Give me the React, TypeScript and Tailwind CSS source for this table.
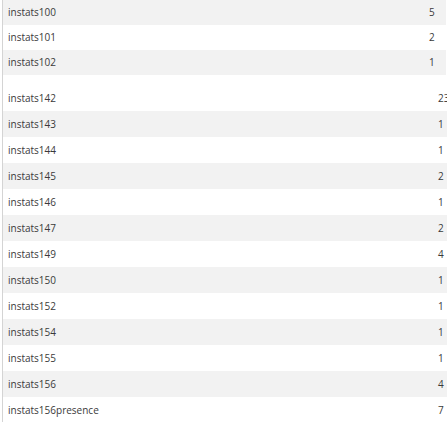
import React from 'react';

const top: [string, string][] = [
  ['instats100', '5'],
  ['instats101', '2'],
  ['instats102', '1'],
];

const rest: [string, string][] = [
  ['instats142', '23'],
  ['instats143', '1'],
  ['instats144', '1'],
  ['instats145', '2'],
  ['instats146', '1'],
  ['instats147', '2'],
  ['instats149', '4'],
  ['instats150', '1'],
  ['instats152', '1'],
  ['instats154', '1'],
  ['instats155', '1'],
  ['instats156', '4'],
  ['instats156presence', '7'],
];

export default function App() {
  return (
    <div
      className="w-[447px] h-[422px] overflow-hidden bg-white pl-[2px]"
      style={{ fontFamily: '"Open Sans", "Noto Sans", sans-serif' }}
    >
      <div className="h-full border-l border-[#d4d4d4] text-[10px] text-[#3a3a3a]">
        {/* first group */}
        <div className="w-[443px]">
          {top.map(([name, val], i) => (
            <div
              key={name}
              className={`flex items-center h-[25px] ${i % 2 === 0 ? 'bg-[#f2f2f2]' : 'bg-white'}`}
            >
              <span className="w-[426px] pl-[5px]">{name}</span>
              <span>{val}</span>
            </div>
          ))}
        </div>

        {/* second group */}
        <div className="mt-[10px] w-[470px]">
          {rest.map(([name, val], i) => (
            <div
              key={name}
              className={`flex items-center h-[26px] ${i % 2 === 1 ? 'bg-[#f2f2f2]' : 'bg-white'}`}
            >
              <span className="w-[435px] pl-[5px]">{name}</span>
              <span>{val}</span>
            </div>
          ))}
        </div>
      </div>
    </div>
  );
}
